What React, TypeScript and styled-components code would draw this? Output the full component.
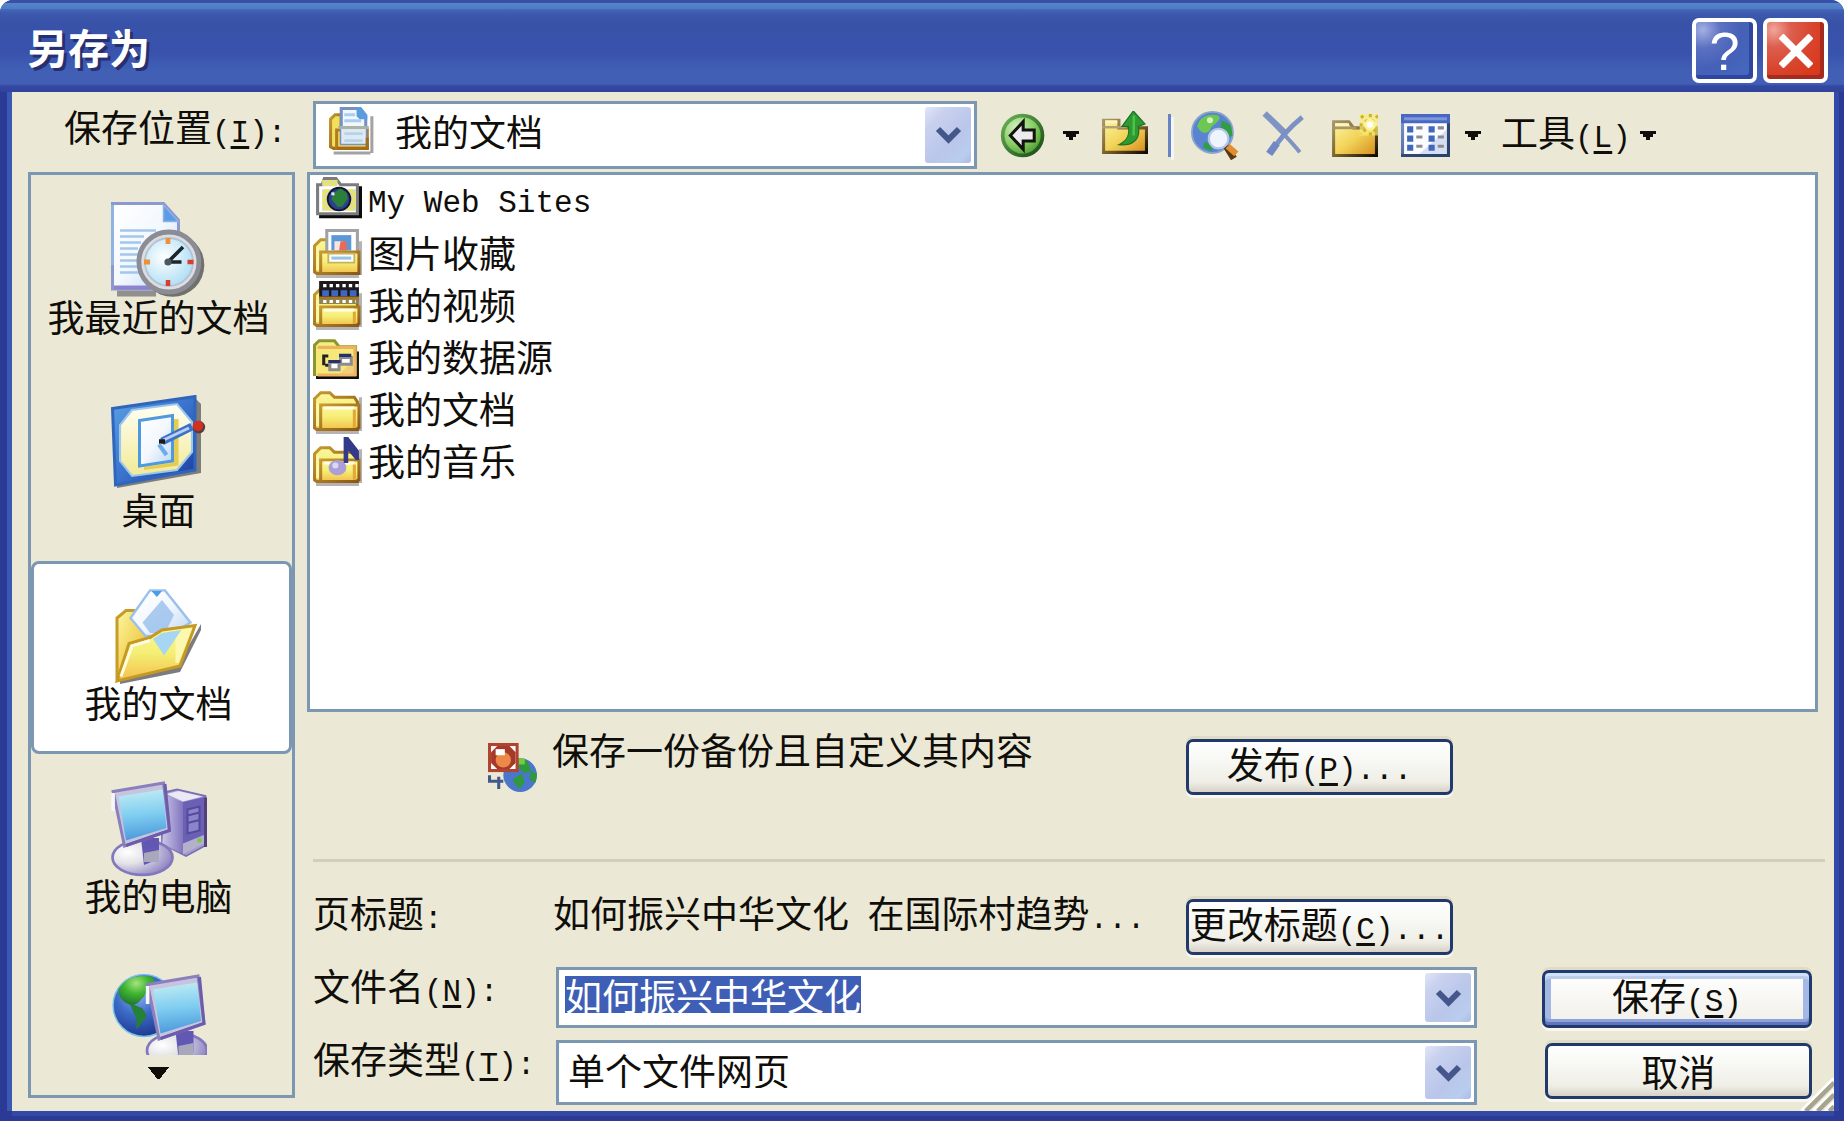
import React, { useEffect, useRef } from 'react';
import styled, { createGlobalStyle, css } from 'styled-components';

const FACE = '#ebe9d6';
const EDGE = '#7c97b2';
const INK = '#100e0a';
const CJK = '"Noto Sans CJK SC", "Liberation Sans", sans-serif';
const MONO = '"Liberation Mono", "Noto Sans CJK SC", monospace';

const Global = createGlobalStyle`
  *, *::before, *::after { box-sizing: border-box; }
  body { margin: 0; background: #fff; }
  button, input, select { font: inherit; color: inherit; margin: 0; }
`;

const Dialog = styled.div`
  display: flex;
  flex-direction: column;
  min-height: 100vh;
  border-radius: 13px 13px 0 0;
  overflow: hidden;
  background: #2b3a94;
  color: ${INK};
  font-family: ${CJK};
  font-size: 37px;
  line-height: 36px;
  white-space: nowrap;
`;

const TitleBar = styled.header`
  display: flex;
  align-items: center;
  gap: 6px;
  height: 92px;
  padding: 0 16px 0 27px;
  background: linear-gradient(
    #3851a6 0, #3851a6 3px, #5685cd 3px, #4f7ac5 9px, #426bb9 9px, #3d5aae 13px,
    #3852a8 22px, #3952ac 52px, #415fb5 70px, #425fb5 84px, #3448a1 86px, #2f429c 92px
  );
`;

const Title = styled.h1`
  flex: 1;
  margin: 0;
  color: #fff;
  font-size: 41px;
  line-height: 48px;
  font-weight: 700;
  text-shadow: 3px 3px 0 #26306f;
`;

const CaptionButton = styled.button<{ $danger?: boolean }>`
  display: grid;
  place-items: center;
  width: 65px;
  height: 65px;
  margin-top: 9px;
  padding: 0;
  border: 4px solid #fff;
  border-radius: 7px;
  color: #fff;
  font-family: "Liberation Sans", sans-serif;
  font-size: 54px;
  line-height: 56px;
  background: ${p => p.$danger
    ? 'radial-gradient(circle at 12% 14%, #f0a79b 0, #dd5f4f 24%, #d8452f 55%, #d9391c 80%)'
    : 'radial-gradient(circle at 12% 14%, #a3b0e2 0, #5b70c2 26%, #4560b7 55%, #4468bd 85%)'};
  box-shadow: inset -4px -4px 0 ${p => (p.$danger ? '#a52a20' : '#2f45a0')};
`;

const Body = styled.main`
  flex: 1;
  display: flex;
  flex-direction: column;
  margin: 0 10px 10px 12px;
  padding: 0 16px 6px;
  background: ${FACE};
  box-shadow: -5px 0 0 #3a58b4, 5px 0 0 #3448a6, 0 5px 0 #3448a6;
  position: relative;
`;

const TopRow = styled.div`
  display: flex;
  height: 80px;
  padding-top: 9px;
`;

const LocationLabel = styled.label`
  width: 285px;
  padding-left: 36px;
  line-height: 50px;
`;

const Ascii = styled.span`
  font-family: ${MONO};
  font-size: 31px;
`;

const Key = styled.u`
  text-decoration-thickness: 3px;
  text-underline-offset: 4px;
`;

const ComboBox = styled.div`
  display: flex;
  align-items: stretch;
  min-width: 0;
  border: 3px solid ${EDGE};
  background: #fff;
  padding: 3px;
`;

const LocationCombo = styled(ComboBox)`
  flex: 0 1 664px;
  height: 68px;
  padding-left: 13px;
`;

const comboText = css`
  flex: 1;
  min-width: 0;
  border: 0;
  outline: 0;
  padding: 0;
  background: transparent;
  appearance: none;
`;

const Select = styled.select<{ $indent: number }>`
  ${comboText}
  height: 48px;
  padding-left: ${p => p.$indent}px;
`;

const NameInput = styled.input`
  ${comboText}
  height: 37px;
  margin: 3px 0 0 3px;
  line-height: 37px;
  caret-color: transparent;
  &::selection { background: #3f5fb6; color: #fff; }
`;

const DropMark = styled.span`
  flex: none;
  display: grid;
  place-items: center;
  width: 46px;
  border-radius: 3px;
  background: linear-gradient(135deg, #e1e6f7 0, #c9d1ee 22%, #b9c6ea 60%, #b9cdee 85%, #aebae4 100%);
  pointer-events: none;
`;

const Toolbar = styled.div`
  display: flex;
  align-items: center;
  gap: 20px;
  height: 68px;
  margin-left: 22px;
`;

const Tool = styled.button`
  display: flex;
  align-items: center;
  gap: 15px;
  padding: 0;
  border: 0;
  background: none;
  line-height: 54px;
`;

const ViewTool = styled(Tool)`
  padding-left: 3px;
`;

const ToolText = styled.span`
  margin-right: -6px;
`;

const Divider = styled.span`
  width: 3px;
  height: 43px;
  background: #6783c4;
  box-shadow: 3px 3px 0 #f4f6f4;
`;

const Content = styled.div`
  flex: 1;
  display: grid;
  grid-template-columns: 267px minmax(0, 1fr);
  gap: 12px;
`;

const Places = styled.nav`
  display: flex;
  flex-direction: column;
  margin-bottom: 7px;
  border: 3px solid ${EDGE};
`;

const Place = styled.button<{ $current?: boolean }>`
  display: flex;
  flex-direction: column;
  align-items: center;
  height: 193px;
  padding: ${p => (p.$current ? '24px 6px 0 0' : '27px 6px 0 0')};
  border: ${p => (p.$current ? `3px solid ${EDGE}` : '0')};
  border-radius: 8px;
  background: ${p => (p.$current ? '#fff' : 'none')};
  line-height: 36px;
`;

const LastPlace = styled(Place)`
  flex: 1;
  height: auto;
  gap: 12px;
`;

const Right = styled.div`
  display: flex;
  flex-direction: column;
`;

const FileList = styled.ul`
  flex: 1;
  margin: 0;
  padding: 0 3px;
  list-style: none;
  border: 3px solid ${EDGE};
  background: #fff;
`;

const FileRow = styled.li`
  display: flex;
  align-items: center;
  gap: 6px;
  height: 52px;
`;

const FileName = styled.span`
  padding-bottom: 3px;
`;

const PublishRow = styled.div`
  display: flex;
  align-items: flex-start;
  height: 147px;
  padding: 27px 365px 0 181px;
`;

const PublishIcon = styled.span`
  display: flex;
  padding: 4px 15px 0 0;
`;

const PublishText = styled.p`
  flex: 1;
  margin: 0;
  margin-top: -8px;
`;

const PushButton = styled.button<{ $primary?: boolean }>`
  flex: none;
  width: 267px;
  height: 56px;
  padding: 0;
  border: 3px solid #22396b;
  border-radius: 7px;
  line-height: 42px;
  background: linear-gradient(#fff 0, #f6f6f2 45%, #efeee6 80%, #d8d2c6 100%);
  box-shadow: 0 3px 0 #f8f8f0, 0 -3px 0 #dfdbc6;
  ${p => p.$primary && css`
    width: 270px;
    height: 58px;
    background: linear-gradient(#fff, #f0efe8) padding-box;
    box-shadow: inset 0 3px 0 #cfe2fa, inset 0 -3px 0 #6274bc, inset 0 6px 0 #bccdec, inset 0 -6px 0 #8ba2dc,
      inset 6px 0 0 #a3b8e4, inset -6px 0 0 #a3b8e4, 0 3px 0 #f8f8f0, 0 -3px 0 #dfdbc6;
  `}
`;

const Rule = styled.hr`
  width: auto;
  height: 3px;
  margin: 0 -7px 0 6px;
  border: 0;
  background: #d0cfb9;
`;

const PageTitle = styled.div`
  display: flex;
  height: 105px;
  padding: 0 365px 0 6px;
`;

const PageTitleName = styled.span`
  width: 240px;
  padding-top: 32px;
`;

const PageTitleValue = styled.span`
  flex: 1;
  padding-top: 32px;
`;

const ChangeTitle = styled(PushButton)`
  margin-top: 37px;
`;

const Form = styled.div`
  display: grid;
  grid-template-columns: 243px minmax(0, 1fr) 270px;
  grid-template-rows: 61px 65px;
  row-gap: 12px;
  padding: 0 6px;
`;

const FieldCombo = styled(ComboBox)`
  margin-right: 65px;
`;

const ButtonCell = styled.div`
  display: flex;
  align-items: flex-start;
  justify-content: flex-end;
  padding-top: 3px;
`;

const Grip = styled.svg`
  position: absolute;
  right: 0;
  bottom: 0;
`;

/* ---------- drawings ---------- */

const Caret = ({ w = 16 }: { w?: number }) => (
  <svg width={w} height={w === 16 ? 9 : 12} viewBox="0 0 5 3" preserveAspectRatio="none" fill={INK} shapeRendering="crispEdges">
    <path d={w === 16 ? 'M0 0h5v1h-1v1h-1v1h-1v-1h-1v-1h-1z' : 'M0 0h5L2.8 3h-.6z'} />
  </svg>
);

const Chevron = () => (
  <svg width="27" height="18" viewBox="0 0 9 6" fill="none" stroke="#45568a" strokeWidth="2">
    <path d="M1 1 4.500 4.500 8 1" />
  </svg>
);

const Drop = () => <DropMark><Chevron /></DropMark>;

const Icon16 = ({ children }: { children: React.ReactNode }) => (
  <svg width="49" height="49" viewBox="0 0 16 16">{children}</svg>
);

const Icon32 = ({ children, rows = 32 }: { children: React.ReactNode; rows?: number }) => (
  <svg width="96" height={rows * 3} viewBox={`0 0 32 ${rows}`}>{children}</svg>
);

const DefsSvg = styled.svg`
  position: absolute;
`;

const Defs = () => (
  <DefsSvg width="0" height="0" aria-hidden="true">
    <defs>
      <linearGradient id="folder" x1="0" y1="0" x2="1" y2="1">
        <stop offset="0" stopColor="#fcf6a0" /><stop offset=".5" stopColor="#f2d358" /><stop offset="1" stopColor="#d38a1a" />
      </linearGradient>
      <linearGradient id="front" x1="0" y1="0" x2="0" y2="1">
        <stop offset="0" stopColor="#fbf7a0" /><stop offset=".5" stopColor="#f5ee74" /><stop offset="1" stopColor="#f2bf4c" />
      </linearGradient>
      <linearGradient id="rim" x1="0" y1="0" x2="1" y2="1">
        <stop offset="0" stopColor="#c89a30" /><stop offset="1" stopColor="#8a5814" />
      </linearGradient>
      <linearGradient id="blackrim" x1="0" y1="0" x2="1" y2="1">
        <stop offset="0" stopColor="#a8966a" /><stop offset=".5" stopColor="#80652e" /><stop offset="1" stopColor="#100a04" />
      </linearGradient>
      <linearGradient id="paper" x1="0" y1="0" x2="1" y2="1">
        <stop offset="0" stopColor="#ffffff" /><stop offset=".5" stopColor="#f3f8fe" /><stop offset="1" stopColor="#bcd6f4" />
      </linearGradient>
      <linearGradient id="screen" x1=".4" y1="0" x2=".5" y2="1">
        <stop offset="0" stopColor="#c0ecf4" /><stop offset=".5" stopColor="#7fcdf0" /><stop offset="1" stopColor="#4a97dc" />
      </linearGradient>
      <linearGradient id="violet" x1="0" y1="0" x2="1" y2="0">
        <stop offset="0" stopColor="#d8d4ee" /><stop offset="1" stopColor="#7468b6" />
      </linearGradient>
      <radialGradient id="ball" cx=".4" cy=".3" r=".7">
        <stop offset="0" stopColor="#8fb4ec" /><stop offset=".5" stopColor="#3c6cc8" /><stop offset="1" stopColor="#1f3a92" />
      </radialGradient>
      <radialGradient id="land" cx=".5" cy=".25" r=".8">
        <stop offset="0" stopColor="#a6e47c" /><stop offset=".45" stopColor="#3fb430" /><stop offset="1" stopColor="#1c6a30" />
      </radialGradient>
      <radialGradient id="green" cx=".35" cy=".3" r=".75">
        <stop offset="0" stopColor="#d2f0c0" /><stop offset=".6" stopColor="#86cc62" /><stop offset="1" stopColor="#4c9a30" />
      </radialGradient>
      <linearGradient id="ring" x1="0" y1="0" x2="1" y2="1">
        <stop offset="0" stopColor="#6cb458" /><stop offset="1" stopColor="#184a14" />
      </linearGradient>
      <radialGradient id="dial" cx=".4" cy=".4" r=".7">
        <stop offset="0" stopColor="#ffffff" /><stop offset="1" stopColor="#a8dcf4" />
      </radialGradient>
      <radialGradient id="base" cx=".25" cy=".35" r=".8">
        <stop offset="0" stopColor="#ffffff" /><stop offset=".4" stopColor="#e4e4e8" /><stop offset="1" stopColor="#8a80c2" />
      </radialGradient>
      <linearGradient id="board" x1="0" y1="0" x2="1" y2="1">
        <stop offset="0" stopColor="#5aa2e4" /><stop offset=".5" stopColor="#3a72cc" /><stop offset="1" stopColor="#1c3c9c" />
      </linearGradient>
      <linearGradient id="cream" x1="0" y1="0" x2="0" y2="1">
        <stop offset="0" stopColor="#fffff4" /><stop offset="1" stopColor="#f2ea96" />
      </linearGradient>
      <linearGradient id="frame" x1="0" y1="0" x2="1" y2="1">
        <stop offset="0" stopColor="#7c98d8" /><stop offset="1" stopColor="#2c406c" />
      </linearGradient>
      <pattern id="dots" width="2" height="2" patternUnits="userSpaceOnUse">
        <rect width="2" height="2" fill="#d8d8c4" /><rect width="1" height="1" fill="#ecec3c" /><rect x="1" y="1" width="1" height="1" fill="#ecec3c" />
      </pattern>
    </defs>
  </DefsSvg>
);

const Shade = () => (
  <path d="M1 15h14v1H1zM15 4h1v11h-1z" fill="#77777a" opacity=".55" />
);

const YellowBack = ({ top = 3 }: { top?: number }) => (
  <>
    <path d={`M.5 14V${top + 2.5}L2.5 ${top + .5}H5.5L7 ${top + 2}H13.5L14.5 ${top + 3.5}V14.5H1.2Z`} fill="url(#front)" stroke="url(#rim)" />
    <path d="M1.5 6v7.5" stroke="#fbf6a8" />
  </>
);

const YellowFront = ({ top = 6 }: { top?: number }) => (
  <>
    <path d={`M2.5 14.5V${top + .5}H15V14L14 14.5Z`} fill="url(#front)" stroke="url(#rim)" />
    <path d={`M3.5 ${top + 1.5}H13.5`} stroke="#fffce0" />
    <path d={`M13.5 ${top + 2}V14`} stroke="#e0a838" />
  </>
);

const LocationIcon = () => (
  <Icon16>
    <path d="M1.500 14.500h12v1h-12zM13.500 3h1v12h-1z" fill="#66666a" opacity=".6" />
    <path d="M.5 13V4L2 2.500H4V13.500H1.500Z" fill="#f2e05c" stroke="url(#rim)" />
    <path d="M2.500 13.500V7.500H12.500V13.500Z" fill="#f6dc58" stroke="#b07c20" />
    <path d="M4 .5H10L12 3V12H4Z" fill="#f2f7fd" stroke="#7490c4" />
    <path d="M9 0h1.500l2 2.500v1.500H10L9 3z" fill="#5a9cdc" />
    <path d="M5 2.500h3.500M5 4.500h5.500" stroke="#a8cdf0" />
    <path d="M4 7h8v5H4z" fill="#dfeaf0" />
    <path d="M3 6.700h10" stroke="#a9b4a8" />
    <path d="M5 8.700h6M5 11h6" stroke="#b4d4ee" strokeWidth=".9" />
    <path d="M2.500 13.500H12.500V10" stroke="#a26c18" fill="none" />
  </Icon16>
);

const BackIcon = () => (
  <Icon16>
    <circle cx="7.700" cy="8" r="6.500" fill="url(#green)" stroke="url(#ring)" strokeWidth="1.200" />
    <path d="M3.700 8 7.900 3.500V6.200h3.600V9.800H7.900v2.700Z" fill="#ececf0" stroke="#14140e" strokeWidth="1" />
  </Icon16>
);

const UpIcon = () => (
  <Icon16>
    <path d="M1.500 13.500V3H6.500V5.500H15.500V13.500Z" fill="url(#folder)" stroke="url(#blackrim)" />
    <path d="M2 3.500h4" stroke="#fcf6b8" />
    <path d="M1 5.300h8" stroke="#b0a078" strokeWidth=".8" />
    <path d="M11.200 0 15 4.200 12.800 5C13.800 9.500 10.500 11.500 6.500 11 9.600 9.600 10 7.500 9.600 5L7.500 5Z" fill="#2f9a32" stroke="#1a7424" strokeWidth=".4" />
    <path d="M11.400 1.500 11.300 8" stroke="#4cc448" strokeWidth=".8" />
  </Icon16>
);

const SearchIcon = () => (
  <Icon16>
    <circle cx="7" cy="7" r="6.700" fill="#5b84d0" stroke="#8aa4cc" strokeWidth=".6" />
    <path d="M2 5C3 1.500 6 .700 9 1.500 10 3 8 4 6.500 5.500 6 7.500 3.500 8 2 5Z" fill="#6cc850" />
    <path d="M10 3l3 1.500.6 3.500-2 1-2-3zM4.500 10l2 1 .5 2.300-3-1.400z" fill="#2f9e44" />
    <circle cx="6.200" cy="3" r="1" fill="#d4f0c0" />
    <path d="M11.500 11.500 14 15.500" stroke="#5c3818" strokeWidth="2.200" />
    <path d="M12 11.500 14.800 14" stroke="#e09030" strokeWidth="2" />
    <circle cx="9" cy="9" r="3.200" fill="#eef4fd" stroke="#b4c6e6" strokeWidth=".7" />
  </Icon16>
);

const DeleteIcon = () => (
  <Icon16>
    <path d="M2 1.300C5 5 9.500 9 13 13.500" stroke="#8094c4" strokeWidth="1.300" fill="none" />
    <path d="M1.500.8 8 7" stroke="#8094c4" strokeWidth="2" />
    <path d="M13.800 2C9.500 5.500 6 9.500 3.500 13.800" stroke="#7a90c6" strokeWidth="1.600" fill="none" />
    <path d="M3 14 5.500 10.500" stroke="#7088c4" strokeWidth="2.400" />
  </Icon16>
);

const NewFolderIcon = () => (
  <Icon16>
    <path d="M1.500 14.500V3.500H6.500L8 5.500H15.500V14.500Z" fill="url(#folder)" stroke="url(#blackrim)" />
    <path d="M2 4.500h4.500" stroke="#fcf6b8" />
    <path d="M1 5.500h8" stroke="#a8966a" strokeWidth=".9" />
    <path d="M10 1h6v7h-6z" fill="#f6ec78" opacity=".7" />
    <path d="M10.500 1.500l5.500 6M16 1.500l-5.500 6M13.500 1v7M10 4.500h6" stroke="#d2b228" strokeWidth="1" strokeDasharray="1 1" />
    <circle cx="13.400" cy="4.500" r="1.900" fill="#fbf49a" />
    <circle cx="13.400" cy="4.500" r="1" fill="#fff" />
  </Icon16>
);

const ViewsIcon = () => (
  <Icon16>
    <path d="M.5 1.500h15v13H.5z" fill="#fbfcff" stroke="url(#frame)" />
    <path d="M6 14 15 14V6z" fill="#c6d2ee" opacity=".7" />
    <path d="M0 1h16v3H0z" fill="#4a68c2" />
    <path d="M1 2h14v1H1z" fill="#7c96dc" />
    {[5, 8, 11].map(y => (
      <g key={y}>
        <path d={`M2 ${y}h2v2H2zM9 ${y}h2v2H9z`} fill="#4268be" />
        <path d={`M5 ${y + .5}h2M12 ${y + .5}h2`} stroke="#8c8c90" />
      </g>
    ))}
    <path d="M0 14.500h16M15.500 4v11" stroke="#2c406c" opacity=".8" />
  </Icon16>
);

const WebIcon = () => (
  <Icon16>
    <path d="M2 3h14v10.500H2z" fill="#0c0c0c" />
    <path d="M1.500 12V2.500H3L3.700.5H7.500L9 2.500H14.500V12Z" fill="#fff" stroke="#7c7c80" />
    <path d="M3 1h5v2H3zM3 4h11v7H3z" fill="url(#dots)" />
    <circle cx="8.500" cy="7.200" r="3.700" fill="#2c3f90" stroke="#10142c" strokeWidth=".6" />
    <path d="M7 5.200 9 3.700l2 1.500.3 2L9.500 9.700H8L6 7.200Z" fill="#2b8038" />
    <path d="M6 5h1v1H6z" fill="#dfe8f4" />
  </Icon16>
);

const PicturesIcon = () => (
  <Icon16>
    <Shade />
    <YellowBack />
    <path d="M4.500.5h10v10h-10z" fill="#fff" stroke="#a2a2a6" />
    <path d="M6 2h6.500v5H6z" fill="#5a98d8" />
    <path d="M7 4h3v3H7z" fill="#fbe4e0" /><path d="M9 4h2v3H8.500z" fill="#e86a5c" />
    <path d="M2.500 14.500V7.500H15V14.500Z" fill="url(#front)" stroke="url(#rim)" />
    <path d="M5 8h8.500v3H5z" fill="#fff" stroke="#c6b25e" strokeWidth=".6" />
    <path d="M6 9.500h6.500" stroke="#98c4e8" />
  </Icon16>
);

const VideoIcon = () => (
  <Icon16>
    <Shade />
    <YellowBack top={2} />
    <YellowFront top={8} />
    <path d="M2 0h13v6H2z" fill="#1c1a1c" />
    <path d="M2 5.500h13v2H2z" fill="#8f8450" />
    <path d="M3.300 1.500H15M3.300 6.700H14" stroke="#fff" strokeDasharray="1.100 1" />
    <path d="M3 4h12" stroke="#4166c2" strokeWidth="2" strokeDasharray="2.200 .8" />
    <path d="M2 5.500h13" stroke="#a87820" strokeWidth=".8" />
  </Icon16>
);

const DataIcon = () => (
  <Icon16>
    <path d="M1 6H15V15H1z" fill="#0c0c0c" />
    <path d="M.5 13.500V4L2 2.500H7L8.500 4.500H13.900V13.500Z" fill="#f6ee84" stroke="#8c962e" />
    <path d="M1 4.500h13V14H1z" fill="#f6e878" /><path d="M1.500 4.700H13.700V13.700H1.500" stroke="#efb25c" fill="none" />
    <path d="M8 14 14 8v6z" fill="#f2bc78" opacity=".6" />
    <path d="M3.500 10.500V7.500H5M4 10.500h2" stroke="#222" fill="none" />
    <path d="M5.500 9.500h3v2.500h-3zM9 8h3.500v2.200H9z" fill="#fff" stroke="#8c8c90" />
    <path d="M5 9.300h4M8.500 7.300h4" stroke="#27306c" />
  </Icon16>
);

const FolderIcon = () => (
  <Icon16>
    <Shade />
    <YellowBack top={2} />
    <YellowFront top={6} />
  </Icon16>
);

const MusicIcon = () => (
  <Icon16>
    <Shade />
    <YellowBack />
    <YellowFront top={7} />
    <ellipse cx="8" cy="10" rx="2.900" ry="2.500" fill="#aaa0d6" />
    <circle cx="7.300" cy="9.300" r="1" fill="#ddd8f2" />
    <path d="M10 0h1.500L15 4.500V7.500H14L11.500 4.500V8.500H10z" fill="#34398a" />
  </Icon16>
);

const RecentIcon = () => (
  <Icon32>
    <path d="M2 29.500h13v2H2z" fill="#55555a" opacity=".6" />
    <path d="M.5 29V.5H17.500L22.500 6V29Z" fill="url(#paper)" stroke="#8c98d0" />
    <path d="M.5 1v20" stroke="#8db4e4" />
    <path d="M1 28.500h14" stroke="#8c84cc" strokeWidth="1.400" />
    <path d="M17.500 1v5.500h5z" fill="#5c9ce4" stroke="#8cb0e4" strokeWidth=".5" />
    <path d="M3 9.500h12M3 11.500h8M3 13.500h7M3 15.500h6M3 17.500h6M3 19.500h6M3 21.500h6M3 23.500h7" stroke="#a2c6ee" strokeWidth=".9" />
    <circle cx="20.500" cy="21" r="10.600" fill="#3c3c40" opacity=".7" />
    <circle cx="19.300" cy="20" r="10" fill="#dcdce2" stroke="#8c8c94" strokeWidth="1.600" />
    <circle cx="19.300" cy="20" r="8" fill="url(#dial)" stroke="#b0c4d4" strokeWidth=".6" />
    <path d="M19 12v2M11 20h2" stroke="#f09038" strokeWidth="1.600" />
    <path d="M19 26v2M25.500 20h2" stroke="#dc3c2c" strokeWidth="1.500" />
    <path d="M19 20l5-5M19 20h4.500" stroke="#1c242c" strokeWidth="1.200" />
    <circle cx="19" cy="20" r="1.200" fill="#4c585c" />
  </Icon32>
);

const DesktopIcon = () => (
  <Icon32>
    <path d="M2 31 30 26V3L28 1V25L2 29Z" fill="#44444a" opacity=".65" />
    <path d="M.5 4.500 28 .5V25L1.500 30Z" fill="url(#board)" stroke="#2f66bc" />
    <path d="M7 5 22 3 27 9V19L22 25 7 27 3 22V10Z" fill="url(#cream)" stroke="#9cc8ee" strokeWidth=".7" />
    <path d="M11 24 21 22.500V8h1.500V23.500L11 25Z" fill="#e6cc50" />
    <path d="M9.500 8.500 20.500 6.800V22L9.500 23.700Z" fill="url(#paper)" stroke="#4f9ade" />
    <path d="M17 15.500 27 10.500" stroke="#3f70c8" strokeWidth="2.600" />
    <path d="M17.500 15 26 11" stroke="#b4d2f4" strokeWidth="1" />
    <path d="M16 15.500h2" stroke="#1c1c14" strokeWidth="1.500" />
    <path d="M16 16.500 18.500 20" stroke="#6cacea" strokeWidth="1.400" />
    <circle cx="29.300" cy="10.700" r="2.100" fill="#5c3c3c" /><circle cx="29" cy="10.300" r="1.700" fill="#d43020" />
  </Icon32>
);

const DocumentsIcon = () => (
  <Icon32>
    <path d="M3 32 23 28 30 14V12L22 26 3 30Z" fill="#44444a" opacity=".7" />
    <path d="M2 30V10L5 7.500H8L14 16V28Z" fill="url(#folder)" stroke="#c89c28" />
    <path d="M6.500 10 13 .8H18L26.500 11.500 19 16 11.500 16Z" fill="url(#paper)" stroke="#9cc0ec" strokeWidth=".8" />
    <path d="M17 4 21 9 18 15H13L10.500 11.500Z" fill="#9cc2ec" opacity=".85" />
    <path d="M13.500 1h3.500l-1.700 2z" fill="#4a9ce4" />
    <path d="M2 31 6 18.500 13 16.500 17 14 28 12.500 23 26Z" fill="url(#front)" stroke="#c49a24" />
    <path d="M3.300 29.500 7 19.300 13 17.500" stroke="#fffce0" fill="none" />
    <path d="M14 17 17 15 23.500 14 17.700 22.500Z" fill="#a6d6f2" />
    <path d="M22.500 25 27 13.500 23.500 14 21.500 17v8z" fill="#fdf8b0" />
  </Icon32>
);

const Monitor = ({ x = 0, y = 0 }: { x?: number; y?: number }) => (
  <g transform={`translate(${x} ${y})`}>
    <ellipse cx="10.500" cy="25.500" rx="10" ry="5.800" fill="url(#base)" stroke="#8478bc" strokeWidth=".9" />
    <path d="M10 19h6v7l-5 2z" fill="#6258b4" />
    <path d="M11 24l5-1v4h-5z" fill="#a8a8bc" />
    <path d="M.7 3.500 17.500.7 19.500 16.500 4.500 21.700Z" fill="#c8c4e0" stroke="#8a80bc" />
    <path d="M.7 4v6" stroke="#f6f6fa" strokeWidth="1.200" />
    <path d="M2.500 5.200 17.200 2.800 18.500 15.700 5 19.800Z" fill="url(#screen)" />
    <path d="M18 1 19.500 16.500 5 21.500" fill="none" stroke="#6c5cac" strokeWidth="1" />
  </g>
);

const ComputerIcon = () => (
  <Icon32>
    <path d="M17 4 22 2.800 31.500 5V21.500L25 25 17 21Z" fill="#a8a0d4" stroke="#7c70b4" strokeWidth=".6" />
    <path d="M18.500 4.300 22.500 3.300 30.500 5.200 24 6.800Z" fill="#ece9f6" />
    <path d="M18.500 5 24 7V24.500L17 21Z" fill="url(#violet)" opacity=".75" />
    <path d="M24 7 31 5.300V21L24 24.500Z" fill="#6a60b4" />
    <path d="M31.500 5.500V22" stroke="#54407a" />
    <path d="M25.500 9.500 29.500 8.500V16.500L25.500 17.500ZM25.500 11.500l4-1M25.500 14l4-1" fill="#8c84c8" stroke="#544aa0" strokeWidth=".7" />
    <path d="M24 20.800 31 18V21L24 24.500Z" fill="#b4b0cc" /><circle cx="29.500" cy="19.800" r=".8" fill="#74cc4c" />
    <Monitor />
  </Icon32>
);

const NetworkIcon = () => (
  <Icon32 rows={27}>
    <circle cx="11" cy="10.500" r="10.300" fill="url(#ball)" stroke="#78c0e8" strokeWidth=".5" />
    <path d="M2.500 5C5 1 9 0 14 1 15.500 3 12 5 11 7.500 9.500 9 9 10 7 10.500 4 9.500 2.500 8 2.500 5Z" fill="url(#land)" />
    <path d="M6 9.500 10.500 11.500 12 14 8.500 18.500 8.500 15Z" fill="#258038" />
    <Monitor x={11.500} y={0} />
  </Icon32>
);

const PublishPicture = () => (
  <Icon16>
    <circle cx="10.500" cy="10.500" r="5.500" fill="#4a76cc" />
    <path d="M10 5l3 1 1 3-2 1-2-2zM8 12l3-2 1 3-2 2zM14 9l2 1-.5 3-2-1z" fill="#2f9a3c" />
    <path d="M10 5h2v2h-2z" fill="#78cc3c" />
    <path d="M0 0h10v9.500H0z" fill="#b04430" />
    <path d="M1 1h8v7.500H1z" fill="#fff" />
    <path d="M3 1h4l2 2v3.500L7 8.500H3L1 6.500V3z" fill="#a43a28" />
    <circle cx="5" cy="5.500" r="2.500" fill="#ec8848" />
    <path d="M2.500 2h3v2h-3z" fill="#fff" />
    <path d="M.5 10.500v2h4.500M3.500 11v4" stroke="#44588c" fill="none" />
  </Icon16>
);

const CloseMark = () => (
  <svg width="34" height="34" viewBox="0 0 34 34" stroke="#fff" strokeWidth="7">
    <path d="M2 2 32 32M32 2 2 32" />
  </svg>
);

/* ---------- dialog ---------- */

const files = [
  { name: 'My Web Sites', ascii: true, icon: <WebIcon /> },
  { name: '图片收藏', icon: <PicturesIcon /> },
  { name: '我的视频', icon: <VideoIcon /> },
  { name: '我的数据源', icon: <DataIcon /> },
  { name: '我的文档', icon: <FolderIcon /> },
  { name: '我的音乐', icon: <MusicIcon /> },
];

const places = [
  { name: '我最近的文档', icon: <RecentIcon /> },
  { name: '桌面', icon: <DesktopIcon /> },
  { name: '我的文档', icon: <DocumentsIcon />, current: true },
  { name: '我的电脑', icon: <ComputerIcon /> },
];

const Mnemonic = ({ k, after = '' }: { k: string; after?: string }) => (
  <Ascii>(<Key>{k}</Key>){after}</Ascii>
);

export default function App() {
  const nameRef = useRef<HTMLInputElement>(null);
  useEffect(() => {
    nameRef.current?.focus();
    nameRef.current?.select();
  }, []);

  return (
    <>
      <Global />
      <Defs />
      <Dialog role="dialog" aria-label="另存为">
        <TitleBar>
          <Title>另存为</Title>
          <CaptionButton>?</CaptionButton>
          <CaptionButton $danger aria-label="关闭"><CloseMark /></CaptionButton>
        </TitleBar>
        <Body>
          <TopRow>
            <LocationLabel htmlFor="location">保存位置<Mnemonic k="I" after=":" /></LocationLabel>
            <LocationCombo>
              <LocationIcon />
              <Select id="location" $indent={17}><option>我的文档</option></Select>
              <Drop />
            </LocationCombo>
            <Toolbar>
              <Tool aria-label="后退"><BackIcon /><Caret /></Tool>
              <Tool aria-label="向上一级"><UpIcon /></Tool>
              <Divider />
              <Tool aria-label="搜索"><SearchIcon /></Tool>
              <Tool aria-label="删除"><DeleteIcon /></Tool>
              <Tool aria-label="新建文件夹"><NewFolderIcon /></Tool>
              <ViewTool aria-label="视图"><ViewsIcon /><Caret /></ViewTool>
              <Tool><ToolText>工具<Mnemonic k="L" /></ToolText><Caret /></Tool>
            </Toolbar>
          </TopRow>
          <Content>
            <Places>
              {places.map(p => (
                <Place key={p.name} $current={p.current}>{p.icon}{p.name}</Place>
              ))}
              <LastPlace aria-label="网上邻居"><NetworkIcon /><Caret w={21} /></LastPlace>
            </Places>
            <Right>
              <FileList>
                {files.map(f => (
                  <FileRow key={f.name}>
                    {f.icon}
                    <FileName>{f.ascii ? <Ascii>{f.name}</Ascii> : f.name}</FileName>
                  </FileRow>
                ))}
              </FileList>
              <PublishRow>
                <PublishIcon><PublishPicture /></PublishIcon>
                <PublishText>保存一份备份且自定义其内容</PublishText>
                <PushButton>发布<Mnemonic k="P" after="..." /></PushButton>
              </PublishRow>
              <Rule />
              <PageTitle>
                <PageTitleName>页标题<Ascii>:</Ascii></PageTitleName>
                <PageTitleValue>如何振兴中华文化<Ascii> </Ascii>在国际村趋势<Ascii>...</Ascii></PageTitleValue>
                <ChangeTitle>更改标题<Mnemonic k="C" after="..." /></ChangeTitle>
              </PageTitle>
              <Form>
                <label htmlFor="filename">文件名<Mnemonic k="N" after=":" /></label>
                <FieldCombo>
                  <NameInput id="filename" ref={nameRef} defaultValue="如何振兴中华文化" />
                  <Drop />
                </FieldCombo>
                <ButtonCell><PushButton $primary>保存<Mnemonic k="S" /></PushButton></ButtonCell>
                <label htmlFor="filetype">保存类型<Mnemonic k="T" after=":" /></label>
                <FieldCombo>
                  <Select id="filetype" $indent={6}><option>单个文件网页</option></Select>
                  <Drop />
                </FieldCombo>
                <ButtonCell><PushButton>取消</PushButton></ButtonCell>
              </Form>
            </Right>
          </Content>
          <Grip width="33" height="33" viewBox="0 0 11 11">
            <path d="M0 11 11 0M4 11 11 4M8 11l3-3" stroke="#fff" strokeWidth="1" />
            <path d="M1.600 11 11 1.600M5.600 11 11 5.600M9.500 11 11 9.500" stroke="#a6a48e" strokeWidth="1.500" />
          </Grip>
        </Body>
      </Dialog>
    </>
  );
}
